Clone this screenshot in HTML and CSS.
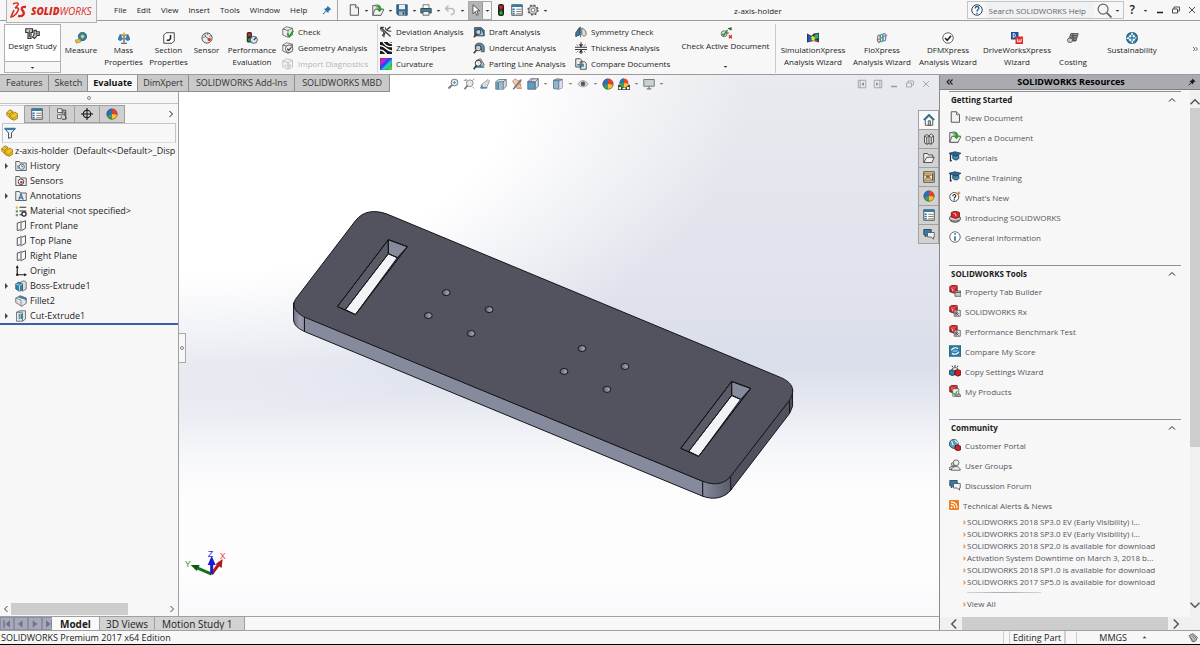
FILE: index.html
```html
<!DOCTYPE html>
<html lang="en">
<head>
<meta charset="utf-8">
<title>z-axis-holder</title>
<link rel="stylesheet" href="styles.css">
</head>
<body>
<svg class="sprite" aria-hidden="true">
  <defs>
    <linearGradient id="rainbow" x1="0" y1="0" x2="1" y2="1"><stop offset="0" stop-color="#e02020"/><stop offset=".25" stop-color="#d020e0"/><stop offset=".45" stop-color="#2040f0"/><stop offset=".6" stop-color="#20d0e0"/><stop offset=".8" stop-color="#30d030"/><stop offset="1" stop-color="#f0e020"/></linearGradient>
  </defs>
  <symbol id="i-caret" viewBox="0 0 8 8"><path d="M1 3h6L4 6z" fill="#333"/></symbol>
  <symbol id="i-pin" viewBox="0 0 16 16"><path d="M9 1l6 6-2 .5-2.500 2.500-.5 3-3-3L2 15l-1-1 5-5-3-3 3-.5L8.500 3z" fill="currentColor"/></symbol>
  <symbol id="i-new" viewBox="0 0 16 16"><path d="M3 1h7l4 4v10H3z" fill="#f2f2f2" stroke="#555" stroke-width="1.300"/><path d="M10 1v4h4" fill="#ddd" stroke="#555"/></symbol>
  <symbol id="i-open" viewBox="0 0 16 16"><path d="M1 15V2h4l1 2h5l1 11z" fill="#e8e8e8" stroke="#555" stroke-width="1.200"/><path d="M1 15l3-8h12l-4 8z" fill="#f5f5f5" stroke="#555" stroke-width="1.200"/><path d="M4 1c5-1 8 1 8 5h2.500L10 11 5.500 6H9c0-2-2-4-5-5z" fill="#2f9a2f"/></symbol>
  <symbol id="i-save" viewBox="0 0 16 16"><path d="M1 1h14v14H3l-2-2z" fill="#2f6f96" stroke="#24495f"/><path d="M4 1h8v6H4z" fill="#e8eef2"/><path d="M4 10h8v5H4z" fill="#aab4bb"/><path d="M9 11h2v3H9z" fill="#333"/></symbol>
  <symbol id="i-print" viewBox="0 0 16 16"><path d="M4 1h8v5H4z" fill="#fff" stroke="#555"/><path d="M1 6h14v6H1z" fill="#3e7ea5" stroke="#333"/><path d="M4 10h8v5H4z" fill="#eee" stroke="#444"/></symbol>
  <symbol id="i-undo" viewBox="0 0 16 16"><path d="M6 2L2 6l4 4M2 6h7c6 0 6 8 0 8" fill="none" stroke="#bbb" stroke-width="2"/></symbol>
  <symbol id="i-cursor" viewBox="0 0 16 16"><path d="M4 1l9 8H9l2 5-2 1-2-5-3 3z" fill="#fff" stroke="#333"/></symbol>
  <symbol id="i-traffic" viewBox="0 0 16 16"><rect x="4" y="0" width="8" height="16" rx="3" fill="#222"/><circle cx="8" cy="4" r="2.500" fill="#d22"/><circle cx="8" cy="8.500" r="1.500" fill="#555"/><circle cx="8" cy="12" r="2.200" fill="#2b2"/></symbol>
  <symbol id="i-list" viewBox="0 0 16 16"><path d="M1 1h14v14H1z" fill="#fff" stroke="#444" stroke-width="1.200"/><path d="M1 1h14v3H1z" fill="#2f7fa8"/><path d="M2 6h3v2H2zM2 9h3v2H2zM2 12h3v2H2z" fill="#2f7fa8"/><path d="M7 7h7M7 10h7M7 13h7" stroke="#555"/></symbol>
  <symbol id="i-gear" viewBox="0 0 16 16"><circle cx="8" cy="8" r="5.500" fill="#ddd" stroke="#555" stroke-width="1.200"/><circle cx="8" cy="8" r="6.500" fill="none" stroke="#555" stroke-width="2" stroke-dasharray="2.500 2.600"/><circle cx="8" cy="8" r="2.500" fill="#fff" stroke="#555"/></symbol>
  <symbol id="i-help" viewBox="0 0 16 16"><circle cx="8" cy="8" r="7" fill="#fff" stroke="#335" stroke-width="1.300"/><path d="M5.500 6c0-3.500 5-3.500 5-.5C10.500 7.500 8 7.500 8 10M8 11.500v1.800" fill="none" stroke="#16618c" stroke-width="1.800"/></symbol>
  <symbol id="i-search" viewBox="0 0 16 16"><circle cx="6.500" cy="6.500" r="5.300" fill="none" stroke="#666" stroke-width="1.300"/><path d="M10.500 10.500l5 5" stroke="#666" stroke-width="2"/></symbol>
  <symbol id="i-min" viewBox="0 0 16 16"><path d="M2 13h12" stroke="currentColor" stroke-width="3"/></symbol>
  <symbol id="i-restore" viewBox="0 0 16 16"><path d="M1 6h10v8H1zM4 6V2h11v8h-4" fill="none" stroke="currentColor" stroke-width="1.500"/></symbol>
  <symbol id="i-close" viewBox="0 0 16 16"><path d="M2 2l12 12M14 2L2 14" stroke="currentColor" stroke-width="1.600"/></symbol>
  <symbol id="i-study" viewBox="0 0 20 16"><path d="M1 1h9v5H8v8H4V6H1z" fill="#ccc" stroke="#333" stroke-width="1.500"/><path d="M12 3h3v2h4v5h-3l-3 4-3-2 2-3z" fill="#ccc" stroke="#333" stroke-width="1.500"/><path d="M6 3v9" stroke="#333"/><circle cx="15.500" cy="7.500" r="1.300" fill="#333"/></symbol>
  <symbol id="i-measure" viewBox="0 0 16 16"><circle cx="10" cy="6" r="5.500" fill="#2f88ae" stroke="#1c4a63"/><circle cx="10" cy="6" r="2.200" fill="#f0d040"/><path d="M0 11l7-2 1 4-6 2z" fill="#f0c020" stroke="#666" stroke-width=".7"/></symbol>
  <symbol id="i-mass" viewBox="0 0 16 16"><path d="M8 1v13M4 15h8M2 4h12" stroke="#444" stroke-width="1.500"/><path d="M0 9l3-5 3 5c-1 3-5 3-6 0zM10 9l3-5 3 5c-1 3-5 3-6 0z" fill="#2f88c0" stroke="#1c5a83"/><circle cx="8" cy="3" r="1.800" fill="#f0c020"/></symbol>
  <symbol id="i-section" viewBox="0 0 16 16"><path d="M1 4l3-3h11v11l-3 3H1z" fill="#fff" stroke="#444" stroke-width="1.300"/><path d="M5 11h3l2-2V4" fill="none" stroke="#222" stroke-width="2"/></symbol>
  <symbol id="i-sensor" viewBox="0 0 16 16"><circle cx="8" cy="8" r="6.800" fill="#eee" stroke="#444" stroke-width="1.200"/><path d="M5 5l6 5" stroke="#555" stroke-width="1.300" fill="none"/><circle cx="11" cy="10" r="2.200" fill="#d33"/><path d="M3 7h2M5 3l1 2M9 2v2M13 5l-2 1" stroke="#333"/></symbol>
  <symbol id="i-perf" viewBox="0 0 16 16"><rect x="1" y="0" width="7" height="14" rx="2" fill="#333"/><circle cx="4.500" cy="3.500" r="2" fill="#e22"/><circle cx="4.500" cy="10.500" r="1.700" fill="#2b2"/><circle cx="10.500" cy="10.500" r="4.700" fill="#cfe3ee" stroke="#245"/><path d="M10.500 10.500l3-3" stroke="#222" stroke-width="1.500"/></symbol>
  <symbol id="i-cube" viewBox="0 0 16 16"><path d="M1 4l5-3 8 2v9l-6 3-7-3z" fill="#eee" stroke="#555"/><path d="M1 4l7 2v9M8 6l6-3" fill="none" stroke="#555"/></symbol>
  <symbol id="i-check" viewBox="0 0 16 16"><use href="#i-cube"/><path d="M7 10l3 4 5-8" fill="none" stroke="#28a028" stroke-width="2.400"/></symbol>
  <symbol id="i-geom" viewBox="0 0 16 16"><use href="#i-cube"/><circle cx="9.500" cy="9" r="5" fill="#eee" stroke="#444"/><path d="M7 9l2 2 3.500-4" fill="none" stroke="#222" stroke-width="1.500"/></symbol>
  <symbol id="i-import" viewBox="0 0 16 16"><g opacity=".4"><use href="#i-cube"/><path d="M3 9h5V6l5 4-5 4v-3H3z" fill="#999"/></g></symbol>
  <symbol id="i-dev" viewBox="0 0 16 16"><path d="M1 2l13 12M1 6c5 0 5 5 4 9M7 2c0 4 4 5 8 5" fill="none" stroke="#333" stroke-width="1.400"/><path d="M9 5l5-4M3 13l4-4M1 2h4M1 2v3" stroke="#333" stroke-width="1.800"/></symbol>
  <symbol id="i-zebra" viewBox="0 0 16 16"><path d="M0 0h16v16H0z" fill="#1a1a1a"/><path d="M0 5c7-1 9 8 16 7M0 11c5-1 6 4 9 5M4 0c3 5 7 7 12 6M11 0c1 1 3 2 5 2" fill="none" stroke="#fff" stroke-width="1.800"/></symbol>
  <symbol id="i-curv" viewBox="0 0 16 16"><path d="M0 0h16v16H0z" fill="url(#rainbow)" stroke="#446" stroke-width=".6"/></symbol>
  <symbol id="i-draft" viewBox="0 0 16 16"><path d="M2 2h9l4 4v7H2z" fill="#2f7fa8" stroke="#444"/><path d="M6 5h6l3 8H5z" fill="#9cc" stroke="#345"/><circle cx="7" cy="8" r="3.500" fill="#dde" fill-opacity=".7" stroke="#333" stroke-width="1.200"/><path d="M5 11l-4 4" stroke="#333" stroke-width="2"/></symbol>
  <symbol id="i-under" viewBox="0 0 16 16"><path d="M3 4c4-5 12-2 12 3v6h-4V9H3z" fill="#5a8fad" stroke="#444"/><circle cx="7" cy="8" r="3.700" fill="#dde" fill-opacity=".8" stroke="#333" stroke-width="1.200"/><path d="M4.500 11L1 15" stroke="#333" stroke-width="2"/></symbol>
  <symbol id="i-part" viewBox="0 0 16 16"><path d="M5 3l5-2 5 8-5 3z" fill="#ccc" stroke="#444"/><path d="M4 12h11" stroke="#2f7fa8" stroke-width="2"/><circle cx="7" cy="7" r="4" fill="#fff" fill-opacity=".7" stroke="#333" stroke-width="1.300"/><path d="M4.500 10L1 15" stroke="#333" stroke-width="2"/></symbol>
  <symbol id="i-symm" viewBox="0 0 16 16"><path d="M1 14V9l5-7v10z" fill="#2f7fa8" stroke="#234"/><path d="M7.500 1v14" stroke="#333"/><path d="M9 3c3 0 6 4 6 8l-3 3-3-3z" fill="#ddd" stroke="#444"/></symbol>
  <symbol id="i-thick" viewBox="0 0 16 16"><path d="M0 7h16M0 10h16M8 0v6M8 11v5" stroke="#333" stroke-width="1.300"/><path d="M5 3l3 4 3-4zM5 14l3-4 3 4z" fill="#333"/><path d="M2 3l2 2M14 3l-2 2M2 14l2-2M14 14l-2-2" stroke="#555"/></symbol>
  <symbol id="i-comp" viewBox="0 0 16 16"><path d="M1 1h6l2 2v9H1zM7 5h6l2 2v8H7z" fill="#eee" stroke="#444" stroke-width="1.200"/><path d="M3 9h5c3 0 3-3 3 3" fill="none" stroke="#2f7fa8" stroke-width="1.700"/></symbol>
  <symbol id="i-active" viewBox="0 0 16 16"><circle cx="5.500" cy="9" r="4" fill="#dde" stroke="#555"/><path d="M3 9l2 2 5-7" fill="none" stroke="#28a028" stroke-width="2"/><path d="M8 8h4M11 2l4-1v3z" stroke="#333" fill="#28a028"/><path d="M12 11l4 4M16 11l-4 4" stroke="#e22" stroke-width="2"/></symbol>
  <symbol id="i-simx" viewBox="0 0 16 16"><path d="M0 2l6 3 3-3 7-1v13l-7-2-9 2z" fill="#335"/><path d="M2 4l4 3v5l-4 1z" fill="#26c"/><path d="M6 5l5 2-1 5-4-1z" fill="#ee2"/><path d="M10 4l5-2v6l-5 2z" fill="#2b5"/><path d="M10 10l5 2v1l-5-1z" fill="#e42"/></symbol>
  <symbol id="i-flo" viewBox="0 0 16 16"><g fill="none" stroke-width="1.500"><ellipse cx="4" cy="9" rx="2" ry="5" stroke="#777"/><ellipse cx="7.500" cy="8" rx="2" ry="5" stroke="#2a7"/><ellipse cx="11" cy="7" rx="2" ry="5" stroke="#48c"/><path d="M1 11l14-7" stroke="#c66"/></g></symbol>
  <symbol id="i-dfm" viewBox="0 0 16 16"><circle cx="8" cy="8" r="7" fill="#fff" stroke="#555" stroke-width="1.200"/><path d="M4 8l3 3 5-6" fill="none" stroke="#222" stroke-width="2.200"/></symbol>
  <symbol id="i-drive" viewBox="0 0 16 16"><path d="M0 0h10v10H0z" fill="#1c4fa0"/><path d="M6 6h10v10H6z" fill="#e02828"/><path d="M3 2v5M3 2c4 0 4 5 0 5M8.500 9v4h5V9M11 10v3" fill="none" stroke="#fff" stroke-width="1.200"/></symbol>
  <symbol id="i-cost" viewBox="0 0 16 16"><path d="M5 2h10l-3 10H2z" fill="#999" stroke="#444"/><path d="M5 5h9M4 8h9M3 11h9M8 2v9" stroke="#333"/><ellipse cx="4" cy="11" rx="3.500" ry="3" fill="#ccc" stroke="#444"/></symbol>
  <symbol id="i-sust" viewBox="0 0 16 16"><circle cx="8" cy="8" r="6.300" fill="#fff" stroke="#2f7fa8" stroke-width="3" stroke-dasharray="8 2"/><circle cx="8" cy="8" r="7.500" fill="none" stroke="#234" stroke-width=".7"/><path d="M8 4v8M4 8h8" stroke="#2f7fa8" stroke-width="2"/></symbol>
  <symbol id="i-zoomfit" viewBox="0 0 16 16"><circle cx="10" cy="6" r="4.500" fill="#dfeaf2" stroke="#777" stroke-width="1.300"/><path d="M6.500 9.500L2 14" stroke="#777" stroke-width="2.500"/><path d="M8 6h4M10 4v4" stroke="#58a"/></symbol>
  <symbol id="i-zoomarea" viewBox="0 0 16 16"><path d="M4 1v3M1 3h3M15 1l-2 2M15 14l-2-2" stroke="#777"/><circle cx="9" cy="7" r="4.500" fill="#dfeaf2" stroke="#888" stroke-width="1.200"/><path d="M6 10l-4 5" stroke="#777" stroke-width="2.300"/></symbol>
  <symbol id="i-prev" viewBox="0 0 16 16"><path d="M3 9l9-7 2 2-4 9-7 1z" fill="#ddd" stroke="#888"/><path d="M2 13h9M2 13l3-3" stroke="#58a" stroke-width="1.700"/></symbol>
  <symbol id="i-sec" viewBox="0 0 16 16"><path d="M1 5l4-3h10v9l-4 4H1z" fill="#ddd" stroke="#567"/><path d="M1 5h4v10H1z" fill="#5f9dbd"/><path d="M6 5h5v10H6z" fill="#9dbfd0"/><path d="M11 5v10M5 5h6l4-3M5 5v10" stroke="#567" fill="none"/></symbol>
  <symbol id="i-wand" viewBox="0 0 16 16"><path d="M2 4l4-3 3 3 5-2-2 6 2 6H8z" fill="#e8d0b0" stroke="#a66" stroke-width=".8"/><path d="M3 15L13 3" stroke="#777" stroke-width="2.300"/><path d="M9 8l5 1M8 10l5 4" stroke="#d73"/></symbol>
  <symbol id="i-orient" viewBox="0 0 16 16"><path d="M1 5h10v10H1z" fill="#5f9dbd" stroke="#468"/><path d="M1 5l4-4h10v10l-4 4V5z" fill="#dde" stroke="#567" stroke-width="1.200"/><path d="M11 5l4-4M8 1L4 5" stroke="#567"/></symbol>
  <symbol id="i-style" viewBox="0 0 16 16"><path d="M2 3l5-2 7 1v11l-5 2-7-1z" fill="#8ab8d0" stroke="#567"/><path d="M9 4v11l5-2V2z" fill="#dde"/><path d="M2 3l7 1 5-2M9 4v11" fill="none" stroke="#567"/></symbol>
  <symbol id="i-eye" viewBox="0 0 16 16"><path d="M1 8c4-6 10-6 14 0-4 5-10 5-14 0z" fill="#ddd" stroke="#888"/><circle cx="8" cy="7.500" r="3" fill="#555"/></symbol>
  <symbol id="i-ball" viewBox="0 0 16 16"><circle cx="8" cy="8" r="7" fill="#eb3b2f"/><path d="M8 8V1a7 7 0 0 0-6.500 9.500z" fill="#2b6cc4"/><path d="M8 8l-6.500 2.500A7 7 0 0 0 8 15z" fill="#2fa84a"/><path d="M8 8v7a7 7 0 0 0 7-6z" fill="#f2c52b"/><circle cx="8" cy="8" r="7" fill="none" stroke="#555" stroke-width=".8"/></symbol>
  <symbol id="i-scene" viewBox="0 0 16 16"><path d="M0 9h16v7H0z" fill="#444"/><path d="M1 12h3v3H1zM6 13h4v2H6zM12 12h3v3h-3z" fill="#eee"/><circle cx="8" cy="6.500" r="6" fill="#e43"/><path d="M8 6.500V.5a6 6 0 0 0-6 7z" fill="#27b"/><path d="M8 6.500l-6 1A6 6 0 0 0 8 12.500z" fill="#3a4"/><path d="M8 6.500v6a6 6 0 0 0 6-5z" fill="#f2c52b"/></symbol>
  <symbol id="i-monitor" viewBox="0 0 16 16"><path d="M1 2h14v9H1z" fill="#c8d0d4" stroke="#777" stroke-width="1.300"/><path d="M8 11v3M5 14.500h6" stroke="#777" stroke-width="1.500"/></symbol>
  <symbol id="i-paneL" viewBox="0 0 16 16"><path d="M2 2h12v12H2zM5 2v12" fill="none" stroke="#999" stroke-width="1.300"/><path d="M11 5v6L7 8z" fill="#888"/></symbol>
  <symbol id="i-paneR" viewBox="0 0 16 16"><path d="M2 2h12v12H2zM11 2v12" fill="none" stroke="#999" stroke-width="1.300"/><path d="M5 5v6l4-3z" fill="#888"/></symbol>
  <symbol id="i-partdoc" viewBox="0 0 16 16"><path d="M1 5l4-4 4 2v3l3-2 4 3v5l-5 3-5-2-5-5z" fill="#f3c325" stroke="#8a6a10"/><path d="M1 5l4 2 4-4M5 7v3l5 3 6-5M9 6l-4 4" fill="none" stroke="#8a6a10" stroke-width=".8"/></symbol>
  <symbol id="i-config" viewBox="0 0 16 16"><path d="M2 1h6v5H2zM2 9h5v5H2z" fill="#eee" stroke="#444"/><path d="M8 3h5v12H8M10 6l4 8" fill="none" stroke="#444" stroke-width="1.300"/><circle cx="10" cy="7" r="2" fill="#aaa" stroke="#444"/></symbol>
  <symbol id="i-target" viewBox="0 0 16 16"><circle cx="8" cy="8" r="5" fill="none" stroke="#111" stroke-width="1.400"/><path d="M8 0v16M0 8h16" stroke="#111" stroke-width="1.400"/></symbol>
  <symbol id="i-filter" viewBox="0 0 16 16"><path d="M1 2h14l-5 6v6l-4 1V8z" fill="#eee" stroke="#345" stroke-width="1.200"/><path d="M1 1h14v3H1z" fill="#2f7fa8"/></symbol>
  <symbol id="i-folder" viewBox="0 0 16 16"><path d="M1 14V2h5l1 2h8v10z" fill="#eee" stroke="#555" stroke-width="1.200"/></symbol>
  <symbol id="i-history" viewBox="0 0 16 16"><use href="#i-folder"/><circle cx="9" cy="9" r="3.500" fill="#fff" stroke="#2f6f96" stroke-width="1.300"/><path d="M9 7v2h2M4 7v5" fill="none" stroke="#234"/></symbol>
  <symbol id="i-sensors" viewBox="0 0 16 16"><use href="#i-folder"/><circle cx="8" cy="9" r="3.700" fill="#fff" stroke="#333" stroke-width="1.200"/><circle cx="8.500" cy="9.500" r="1.700" fill="#d33"/></symbol>
  <symbol id="i-annot" viewBox="0 0 16 16"><use href="#i-folder"/><path d="M5 13l3-8 3 8M6 10.500h4" fill="none" stroke="#2f6f96" stroke-width="1.500"/></symbol>
  <symbol id="i-material" viewBox="0 0 16 16"><path d="M1 2h3v3H1z" fill="#e8c020"/><path d="M1 7h3v3H1z" fill="#3a8"/><path d="M1 12h3v3H1z" fill="#888"/><path d="M6 3h9M6 8h9M6 13h4" stroke="#333" stroke-width="1.500"/><circle cx="12" cy="12" r="2.800" fill="#fff" stroke="#222" stroke-width="1.600"/></symbol>
  <symbol id="i-plane" viewBox="0 0 16 16"><path d="M7 3L3 4v10l4-1M8 1v14M9 3l5-2v10l-5 3" fill="none" stroke="#444" stroke-width="1.200"/></symbol>
  <symbol id="i-origin" viewBox="0 0 16 16"><path d="M3 2v11h12" fill="none" stroke="#222" stroke-width="1.600"/><path d="M1 4l2-4 2 4zM12 11l4 2-4 2z" fill="#222"/><circle cx="3" cy="13" r="1.700" fill="#222"/></symbol>
  <symbol id="i-boss" viewBox="0 0 16 16"><path d="M7 3l5-2 3 2v9l-5 3z" fill="#ddd" stroke="#555"/><path d="M1 5l4-2 5 2v8l-4 2-5-3z" fill="#3586ad" stroke="#1c4a63"/><path d="M1 5l5 2 4-2M6 7v8" fill="none" stroke="#cfe3ee"/></symbol>
  <symbol id="i-fillet" viewBox="0 0 16 16"><path d="M1 4l6-3 8 3v7l-6 4-8-5z" fill="#e4e4e4" stroke="#555"/><path d="M7 1l8 3v5c-1-3-3-4-6-4L4 3z" fill="#3586ad"/><path d="M1 4l7 3v8" fill="none" stroke="#777"/></symbol>
  <symbol id="i-cut" viewBox="0 0 16 16"><path d="M2 3l4-2h8v11l-4 3H2z" fill="#e4e4e4" stroke="#555"/><path d="M10 4v11M2 3h8" stroke="#555"/><path d="M5 5h5v7H5z" fill="#3586ad"/><path d="M7 5v7" stroke="#cfe3ee"/></symbol>
  <symbol id="i-home" viewBox="0 0 16 16"><path d="M3 8v7h10V8L8 3z" fill="#fff" stroke="#444" stroke-width="1.200"/><path d="M1 8l7-7 7 7" fill="none" stroke="#1f6f96" stroke-width="2.200"/><path d="M7 9h3v6H7z" fill="#bbb" stroke="#444"/></symbol>
  <symbol id="i-library" viewBox="0 0 16 16"><path d="M2 4l3-2 3 2 3-3 3 3v8l-3 3-3-1-3 1-3-2z" fill="#e4e4e4" stroke="#444" stroke-width="1.200"/><path d="M5 6v9M8 4v10M11 6v9M2 4l3 2 3-2 3 2 3-2" fill="none" stroke="#444" stroke-width="1.200"/></symbol>
  <symbol id="i-files" viewBox="0 0 16 16"><path d="M1 14V2h5l1 2h6v3M1 14l4-7h10l-3 7z" fill="#f2f2f2" stroke="#444" stroke-width="1.200"/></symbol>
  <symbol id="i-palette" viewBox="0 0 16 16"><path d="M1 1h14v14H1z" fill="#eee" stroke="#444" stroke-width="1.300"/><path d="M2 3h9v3H2zM2 13l2-4h6l2 4z" fill="#f0b820" stroke="#765" stroke-width=".8"/><path d="M4 6h5v3H4z" fill="#765"/><path d="M13 3v10" stroke="#333" stroke-width="1.500"/></symbol>
  <symbol id="i-chat" viewBox="0 0 16 16"><path d="M1 2h10v7H6l-3 3V9H1z" fill="#2f7fa8" stroke="#234"/><path d="M6 6h9v6h-1v3l-3-3H6z" fill="#f2f2f2" stroke="#444"/></symbol>
  <symbol id="i-cap" viewBox="0 0 16 16"><path d="M5 6v4c2 2 6 3 8 0V6z" fill="#3b8fbb" stroke="#123"/><path d="M0 3l8-2 8 2-7 4z" fill="#256a90" stroke="#1c3a53"/><path d="M2 4v10M1 13h3" stroke="#234" stroke-width="1.600"/></symbol>
  <symbol id="i-whats" viewBox="0 0 16 16"><circle cx="7" cy="8" r="6" fill="#fff" stroke="#444" stroke-width="1.200"/><path d="M5 7c0-3 4-3 4-.5C9 8 7 8 7 10M7 11v1.500" fill="none" stroke="#222" stroke-width="1.500"/><path d="M13 0l1 2 2 .5-2 1-1 2.500-1-2.500-2-1 2-.5z" fill="#e8791e"/></symbol>
  <symbol id="i-intro" viewBox="0 0 16 16"><path d="M1 8c3-3 11-3 14 0v4c-3 4-11 4-14 0z" fill="#ccc" stroke="#333"/><path d="M2 12c3 2 9 2 12 0" fill="none" stroke="#333"/><path d="M3 2l5-2 6 2v6l-5 2-6-2z" fill="#d8232a" stroke="#611"/><path d="M6 3l3 1v3" stroke="#fff" fill="none"/></symbol>
  <symbol id="i-info" viewBox="0 0 16 16"><circle cx="8" cy="8" r="7" fill="#fff" stroke="#444"/><path d="M8 7v6M8 3v2" stroke="#1f78a8" stroke-width="2.200"/></symbol>
  <symbol id="i-redcube" viewBox="0 0 16 16"><path d="M1 2l4-2 6 1v8l-4 2-6-2z" fill="#cf1f28" stroke="#611"/><path d="M1 2l6 1.500V11M7 3.500L11 1" fill="none" stroke="#f08080" stroke-width=".8"/><path d="M3 5l2 .5v3" fill="none" stroke="#fff"/></symbol>
  <symbol id="i-ptab" viewBox="0 0 16 16"><use href="#i-redcube"/><path d="M8 8h8v7H8z" fill="#ccc" stroke="#444"/><path d="M8 10h8" stroke="#444"/></symbol>
  <symbol id="i-rx" viewBox="0 0 16 16"><use href="#i-redcube"/><path d="M7 7h8v8H7z" fill="#eee" stroke="#444"/><path d="M9 14V9h2v2H9l4 3M13 11l-3 3" fill="none" stroke="#333"/></symbol>
  <symbol id="i-score" viewBox="0 0 16 16"><path d="M0 1h16v14H0z" fill="#2f7fa8" stroke="#1c4a63"/><path d="M3 7c2-4 7-4 9-2M13 9c-2 4-7 4-9 2" fill="none" stroke="#fff" stroke-width="1.600"/><path d="M5 8h6" stroke="#fff"/></symbol>
  <symbol id="i-copy" viewBox="0 0 16 16"><path d="M4 1l1 2M8 0v3M12 1l-1 2" stroke="#333" stroke-width="1.300"/><path d="M0 8l4-2 4 2v5l-4 1-4-2z" fill="#2f7fa8" stroke="#123"/><path d="M8 7l4-1 4 2v5l-4 2-4-2z" fill="#cf1f28" stroke="#411"/><path d="M4 5c3-2 6-2 8 0" fill="none" stroke="#333"/></symbol>
  <symbol id="i-prod" viewBox="0 0 16 16"><use href="#i-redcube"/><path d="M5 5h8v10H5z" fill="#eee" stroke="#555"/><path d="M6 11l2 2 3-5" fill="none" stroke="#28a028" stroke-width="1.500"/><path d="M9 15c0-4 7-4 7 0z" fill="#bbb" stroke="#444"/></symbol>
  <symbol id="i-portal" viewBox="0 0 16 16"><circle cx="6.500" cy="6.500" r="6" fill="#5b9dbf" stroke="#234"/><path d="M3 3c3 1 0 4 3 5M8 1c0 3 4 2 4 5" stroke="#dfe" stroke-width="1.500" fill="none"/><path d="M8 9l4-1 4 2v4l-4 2-4-2z" fill="#cf1f28" stroke="#411"/></symbol>
  <symbol id="i-users" viewBox="0 0 16 16"><path d="M0 14c0-4 3-4 5-4l3-1 1 5z" fill="#ccc" stroke="#444"/><circle cx="5" cy="7" r="2" fill="#ddd" stroke="#444"/><path d="M3 15c0-3 3-4 5-5h3c2 1 4 2 4 5z" fill="#e8e8e8" stroke="#444"/><circle cx="9.500" cy="5" r="3.800" fill="#eee" stroke="#444"/></symbol>
  <symbol id="i-rss" viewBox="0 0 16 16"><rect width="16" height="16" rx="2" fill="#f07c1c"/><circle cx="4" cy="12" r="1.600" fill="#fff"/><path d="M3 7c4 0 6 2 6 6M3 3c7 0 10 4 10 10" fill="none" stroke="#fff" stroke-width="1.800"/></symbol>
  <symbol id="i-up" viewBox="0 0 16 16"><path d="M2 11l6-6 6 6" fill="none" stroke="currentColor" stroke-width="2"/></symbol>
  <symbol id="i-down" viewBox="0 0 16 16"><path d="M2 5l6 6 6-6" fill="none" stroke="currentColor" stroke-width="2"/></symbol>
  <symbol id="i-left" viewBox="0 0 16 16"><path d="M11 2L5 8l6 6" fill="none" stroke="currentColor" stroke-width="2"/></symbol>
  <symbol id="i-right" viewBox="0 0 16 16"><path d="M5 2l6 6-6 6" fill="none" stroke="currentColor" stroke-width="2"/></symbol>
  <symbol id="i-dleft" viewBox="0 0 16 16"><path d="M7 3L2 8l5 5M13 3L8 8l5 5" fill="none" stroke="currentColor" stroke-width="2.200"/></symbol>
  <symbol id="i-dright" viewBox="0 0 16 16"><path d="M4 4l4 4-4 4M9 4l4 4-4 4" fill="none" stroke="currentColor" stroke-width="1.600"/></symbol>
  <symbol id="i-first" viewBox="0 0 16 16"><path d="M4 3v10" stroke="#737486" stroke-width="2"/><path d="M12 3v10L6 8z" fill="#737486"/></symbol>
  <symbol id="i-back" viewBox="0 0 16 16"><path d="M10 3v10L4 8z" fill="#737486"/></symbol>
  <symbol id="i-fwd" viewBox="0 0 16 16"><path d="M5 3v10l6-5z" fill="#737486"/></symbol>
  <symbol id="i-last" viewBox="0 0 16 16"><path d="M12 3v10" stroke="#737486" stroke-width="2"/><path d="M4 3v10l6-5z" fill="#737486"/></symbol>
  <symbol id="i-tag" viewBox="0 0 16 16"><path d="M2 4l6-3 7 6-3 6-5 1z" fill="#ccc" stroke="#444" stroke-width="1.200"/><path d="M5 4l7 7M3 7l6 6M7 3l6 5" stroke="#444"/></symbol>
</svg>

<header class="titlebar">
  <div class="brand">
    <svg class="brand-mark" viewBox="0 0 18 18" aria-hidden="true"><g fill="none" stroke="#da291c"><path d="M3 2c4-2 6-1 5 1L5 6" stroke-width="1.400"/><path d="M5 6c5-1 4 2 1 6-2 2-4 3-5 3L4 8" stroke-width="1.600"/><path d="M16 5c-5-1-5 2-3 4 2 3 0 6-5 5" stroke-width="2.300"/></g></svg>
    <span class="brand-name"><b>SOLID</b>WORKS</span>
  </div>
  <nav class="menu" aria-label="Main menu">
    <button>File</button><button>Edit</button><button>View</button><button>Insert</button><button>Tools</button><button>Window</button><button>Help</button>
    <button class="menu-pin" aria-label="Pin menu"><svg class="icon-s"><use href="#i-pin"/></svg></button>
  </nav>
  <div class="quick">
    <button aria-label="New"><svg class="icon"><use href="#i-new"/></svg></button><button class="drop" aria-label="New options"><svg class="caret"><use href="#i-caret"/></svg></button>
    <button aria-label="Open"><svg class="icon"><use href="#i-open"/></svg></button><button class="drop" aria-label="Open options"><svg class="caret"><use href="#i-caret"/></svg></button>
    <button aria-label="Save"><svg class="icon"><use href="#i-save"/></svg></button><button class="drop" aria-label="Save options"><svg class="caret"><use href="#i-caret"/></svg></button>
    <button aria-label="Print"><svg class="icon"><use href="#i-print"/></svg></button><button class="drop" aria-label="Print options"><svg class="caret"><use href="#i-caret"/></svg></button>
    <button aria-label="Undo"><svg class="icon"><use href="#i-undo"/></svg></button><button class="drop" aria-label="Undo options"><svg class="caret"><use href="#i-caret"/></svg></button>
    <span class="split"><button class="pressed" aria-label="Select"><svg class="icon"><use href="#i-cursor"/></svg></button><button class="drop" aria-label="Select options"><svg class="caret"><use href="#i-caret"/></svg></button></span>
    <button aria-label="Rebuild"><svg class="icon"><use href="#i-traffic"/></svg></button>
    <button aria-label="File properties"><svg class="icon"><use href="#i-list"/></svg></button>
    <button aria-label="Options"><svg class="icon"><use href="#i-gear"/></svg></button><button class="drop" aria-label="More options"><svg class="caret"><use href="#i-caret"/></svg></button>
  </div>
  <h1 class="doc-title">z-axis-holder</h1>
  <label class="search"><svg class="icon"><use href="#i-help"/></svg><input type="text" placeholder="Search SOLIDWORKS Help" aria-label="Search SOLIDWORKS Help"><svg class="icon-l"><use href="#i-search"/></svg><svg class="caret"><use href="#i-caret"/></svg></label>
  <div class="window-buttons">
    <button class="q" aria-label="Help">?</button><button aria-label="Help options"><svg class="caret"><use href="#i-caret"/></svg></button>
    <button aria-label="Minimize"><svg class="icon-xs"><use href="#i-min"/></svg></button><button aria-label="Restore"><svg class="icon-xs"><use href="#i-restore"/></svg></button><button aria-label="Close"><svg class="icon-xs"><use href="#i-close"/></svg></button>
  </div>
</header>

<section class="ribbon" aria-label="Evaluate commands">
  <button class="study"><span class="study-main"><svg class="icon-w"><use href="#i-study"/></svg>Design Study</span><span class="study-drop"><svg class="caret"><use href="#i-caret"/></svg></span></button>
  <button class="cmd w40"><svg class="icon"><use href="#i-measure"/></svg>Measure</button>
  <button class="cmd w44"><svg class="icon"><use href="#i-mass"/></svg>Mass<br>Properties</button>
  <button class="cmd w44"><svg class="icon"><use href="#i-section"/></svg>Section<br>Properties</button>
  <button class="cmd w32"><svg class="icon"><use href="#i-sensor"/></svg>Sensor</button>
  <button class="cmd w60"><svg class="icon"><use href="#i-perf"/></svg>Performance<br>Evaluation</button>
  <div class="stack s1">
    <button><svg class="icon"><use href="#i-check"/></svg>Check</button>
    <button><svg class="icon"><use href="#i-geom"/></svg>Geometry Analysis</button>
    <button class="off" disabled><svg class="icon"><use href="#i-import"/></svg>Import Diagnostics</button>
  </div>
  <div class="stack s2">
    <button><svg class="icon"><use href="#i-dev"/></svg>Deviation Analysis</button>
    <button><svg class="icon"><use href="#i-zebra"/></svg>Zebra Stripes</button>
    <button><svg class="icon"><use href="#i-curv"/></svg>Curvature</button>
  </div>
  <div class="stack s3">
    <button><svg class="icon"><use href="#i-draft"/></svg>Draft Analysis</button>
    <button><svg class="icon"><use href="#i-under"/></svg>Undercut Analysis</button>
    <button><svg class="icon"><use href="#i-part"/></svg>Parting Line Analysis</button>
  </div>
  <div class="stack s3">
    <button><svg class="icon"><use href="#i-symm"/></svg>Symmetry Check</button>
    <button><svg class="icon"><use href="#i-thick"/></svg>Thickness Analysis</button>
    <button><svg class="icon"><use href="#i-comp"/></svg>Compare Documents</button>
  </div>
  <button class="cmd active-doc"><svg class="icon"><use href="#i-active"/></svg>Check Active Document<svg class="caret"><use href="#i-caret"/></svg></button>
  <button class="cmd w72"><svg class="icon"><use href="#i-simx"/></svg>SimulationXpress<br>Analysis Wizard</button>
  <button class="cmd w66"><svg class="icon"><use href="#i-flo"/></svg>FloXpress<br>Analysis Wizard</button>
  <button class="cmd w66"><svg class="icon"><use href="#i-dfm"/></svg>DFMXpress<br>Analysis Wizard</button>
  <button class="cmd w72"><svg class="icon"><use href="#i-drive"/></svg>DriveWorksXpress<br>Wizard</button>
  <button class="cmd w40"><svg class="icon"><use href="#i-cost"/></svg><br>Costing</button>
  <button class="cmd w80"><svg class="icon"><use href="#i-sust"/></svg>Sustainability</button>
  <button class="more" aria-label="More commands"><svg class="icon-xs"><use href="#i-dright"/></svg></button>
</section>

<main class="workspace">
  <div class="editor">
    <div class="tabrow">
      <nav class="tabs" aria-label="Command tabs">
        <button>Features</button><button class="tight">Sketch</button><button class="tight on">Evaluate</button><button class="tight">DimXpert</button><button class="roomy">SOLIDWORKS Add-Ins</button><button class="roomy">SOLIDWORKS MBD</button>
      </nav>
      <div class="hud">
        <button aria-label="Zoom to fit"><svg class="icon"><use href="#i-zoomfit"/></svg></button>
        <button aria-label="Zoom to area"><svg class="icon"><use href="#i-zoomarea"/></svg></button>
        <button aria-label="Previous view"><svg class="icon"><use href="#i-prev"/></svg></button>
        <button aria-label="Section view"><svg class="icon"><use href="#i-sec"/></svg></button>
        <button aria-label="Dynamic annotation"><svg class="icon"><use href="#i-wand"/></svg></button>
        <button class="wide" aria-label="View orientation"><svg class="icon"><use href="#i-orient"/></svg><svg class="caret"><use href="#i-caret"/></svg></button>
        <button class="wide" aria-label="Display style"><svg class="icon"><use href="#i-style"/></svg><svg class="caret"><use href="#i-caret"/></svg></button>
        <button class="wide" aria-label="Hide or show items"><svg class="icon"><use href="#i-eye"/></svg><svg class="caret"><use href="#i-caret"/></svg></button>
        <button aria-label="Edit appearance"><svg class="icon"><use href="#i-ball"/></svg></button>
        <button class="wide" aria-label="Apply scene"><svg class="icon"><use href="#i-scene"/></svg><svg class="caret"><use href="#i-caret"/></svg></button>
        <button class="wide" aria-label="View settings"><svg class="icon"><use href="#i-monitor"/></svg><svg class="caret"><use href="#i-caret"/></svg></button>
      </div>
      <div class="doc-buttons">
        <button aria-label="Collapse left"><svg class="icon-s"><use href="#i-paneL"/></svg></button><button aria-label="Collapse right"><svg class="icon-s"><use href="#i-paneR"/></svg></button><button aria-label="Minimize document"><svg class="icon-xs"><use href="#i-min"/></svg></button><button aria-label="Restore document"><svg class="icon-xs"><use href="#i-restore"/></svg></button><button aria-label="Close document"><svg class="icon-xs"><use href="#i-close"/></svg></button>
      </div>
    </div>

    <div class="stage">
      <aside class="tree-panel" aria-label="Feature tree">
        <div class="grip"><span></span></div>
        <div class="tree-tabs">
          <button class="on" aria-label="Feature manager"><svg class="icon"><use href="#i-partdoc"/></svg></button><button aria-label="Properties"><svg class="icon"><use href="#i-list"/></svg></button><button aria-label="Configurations"><svg class="icon"><use href="#i-config"/></svg></button><button aria-label="DimXpert manager"><svg class="icon"><use href="#i-target"/></svg></button><button aria-label="Display manager"><svg class="icon"><use href="#i-ball"/></svg></button>
          <button class="next" aria-label="More tabs"><svg class="icon-xs"><use href="#i-right"/></svg></button>
        </div>
        <label class="filter"><svg class="icon"><use href="#i-filter"/></svg><input type="text" aria-label="Filter tree"></label>
        <ul class="tree">
          <li class="root"><svg class="icon"><use href="#i-partdoc"/></svg>z-axis-holder&nbsp; (Default&lt;&lt;Default&gt;_Disp</li>
          <li class="has"><svg class="icon"><use href="#i-history"/></svg>History</li>
          <li><svg class="icon"><use href="#i-sensors"/></svg>Sensors</li>
          <li class="has"><svg class="icon"><use href="#i-annot"/></svg>Annotations</li>
          <li><svg class="icon"><use href="#i-material"/></svg>Material &lt;not specified&gt;</li>
          <li><svg class="icon"><use href="#i-plane"/></svg>Front Plane</li>
          <li><svg class="icon"><use href="#i-plane"/></svg>Top Plane</li>
          <li><svg class="icon"><use href="#i-plane"/></svg>Right Plane</li>
          <li><svg class="icon"><use href="#i-origin"/></svg>Origin</li>
          <li class="has"><svg class="icon"><use href="#i-boss"/></svg>Boss-Extrude1</li>
          <li><svg class="icon"><use href="#i-fillet"/></svg>Fillet2</li>
          <li class="has"><svg class="icon"><use href="#i-cut"/></svg>Cut-Extrude1</li>
        </ul>
        <div class="hscroll tree-scroll"><svg class="icon-xs"><use href="#i-left"/></svg><span class="track"><span class="thumb"></span></span><svg class="icon-xs"><use href="#i-right"/></svg></div>
      </aside>

      <div class="viewport">
        <svg class="model" viewBox="179 92 760 525" role="img" aria-label="Plate with two slots and eight holes">
          <defs>
            <linearGradient id="roundL"><stop offset="0" stop-color="#6d7180"/><stop offset=".6" stop-color="#9a9fb2"/><stop offset="1" stop-color="#858a9d"/></linearGradient>
            <linearGradient id="roundR"><stop offset="0" stop-color="#868b9e"/><stop offset="1" stop-color="#565965"/></linearGradient>
            <linearGradient id="bore"><stop offset="0" stop-color="#565965"/><stop offset=".7" stop-color="#999eb0"/><stop offset="1" stop-color="#6c707f"/></linearGradient>
            <g id="slot"><path d="M388 240L407 247L355 315L337 307Z" fill="#595b67"/><path d="M388 240L407 247L397 258L388 254Z" fill="#858a9d"/><path d="M388 254L397 258L355 315L345 310Z" class="through"/><path d="M388 240V254L345 310M388 254L397 258" fill="none"/><path d="M388 240L407 247L355 315L337 307Z" fill="none"/></g>
            <ellipse id="hole" rx="4" ry="3" fill="url(#bore)"/>
          </defs>
          <g stroke="#15161a" stroke-width="1" stroke-linejoin="round">
            <path d="M293 303V319C293 326 298 329 304 332V317Z" fill="url(#roundL)"/>
            <path d="M304 317L703 482V497L304 332Z" fill="#858a9d"/>
            <path d="M703 482V497C714 501 725 499 732 490V475Z" fill="url(#roundR)"/>
            <path d="M731 476V491L790 414L793 407V390L789 402Z" fill="#50515c"/>
            <path d="M790 402V414" fill="none"/>
            <path d="M297 297L355 221C363 211 374 210 386 214L781 378C793 383 797 391 789 402L731 477C724 486 713 486 703 482L305 318C294 313 290 305 297 297Z" fill="#52535e"/>
            <use href="#slot"/><use href="#slot" x="344" y="142"/>
            <use href="#hole" x="446" y="293"/><use href="#hole" x="489" y="310"/><use href="#hole" x="428" y="316"/><use href="#hole" x="471" y="334"/>
            <use href="#hole" x="582" y="349"/><use href="#hole" x="625" y="367"/><use href="#hole" x="564" y="372"/><use href="#hole" x="607" y="390"/>
          </g>
          <g stroke-width="3"><path d="M211 575L197 569" stroke="#17701a"/><path d="M190 566L199 566L196 572Z" fill="#0c5a10"/><path d="M211 575L219 564" stroke="#b01820"/><path d="M222 560L221 569L215 565Z" fill="#b01820"/><path d="M211 575V564" stroke="#1a1ad0"/><path d="M211 557L215 566H207Z" fill="#1a1ad0"/></g>
          <g class="axis"><text x="184" y="568" fill="#2f9a2f">Y</text><text x="207" y="558" fill="#2a2af0">Z</text><text x="219" y="560" fill="#f04040">X</text></g>
        </svg>
        <button class="handle" aria-label="Resize panel"><span></span></button>
        <nav class="side-tabs" aria-label="Task pane tabs">
          <button class="on" aria-label="Resources"><svg class="icon"><use href="#i-home"/></svg></button><button aria-label="Design library"><svg class="icon"><use href="#i-library"/></svg></button><button aria-label="File explorer"><svg class="icon"><use href="#i-files"/></svg></button><button aria-label="View palette"><svg class="icon"><use href="#i-palette"/></svg></button><button aria-label="Appearances"><svg class="icon"><use href="#i-ball"/></svg></button><button aria-label="Custom properties"><svg class="icon"><use href="#i-list"/></svg></button><button aria-label="Forum"><svg class="icon"><use href="#i-chat"/></svg></button>
        </nav>
      </div>
    </div>

    <nav class="bottom-tabs" aria-label="Model tabs">
      <div class="vcr"><button aria-label="First"><svg class="icon"><use href="#i-first"/></svg></button><button aria-label="Back"><svg class="icon"><use href="#i-back"/></svg></button><button aria-label="Forward"><svg class="icon"><use href="#i-fwd"/></svg></button><button aria-label="Last"><svg class="icon"><use href="#i-last"/></svg></button></div>
      <button class="on">Model</button><button>3D Views</button><button class="motion">Motion Study 1</button>
    </nav>
  </div>

  <aside class="pane" aria-label="SOLIDWORKS Resources">
    <header class="pane-head"><button aria-label="Collapse pane"><svg class="icon-xs"><use href="#i-dleft"/></svg></button><h2>SOLIDWORKS Resources</h2><button aria-label="Pin pane"><svg class="icon-xs"><use href="#i-pin"/></svg></button></header>
    <div class="pane-body">
      <div class="sections">
        <section>
          <h3>Getting Started<svg class="icon-xs"><use href="#i-up"/></svg></h3>
          <a href="#new"><svg class="icon"><use href="#i-new"/></svg>New Document</a>
          <a href="#open"><svg class="icon"><use href="#i-open"/></svg>Open a Document</a>
          <a href="#tutorials"><svg class="icon"><use href="#i-cap"/></svg>Tutorials</a>
          <a href="#training"><svg class="icon"><use href="#i-cap"/></svg>Online Training</a>
          <a href="#whats-new"><svg class="icon"><use href="#i-whats"/></svg>What's New</a>
          <a href="#intro"><svg class="icon"><use href="#i-intro"/></svg>Introducing SOLIDWORKS</a>
          <a href="#info"><svg class="icon"><use href="#i-info"/></svg>General Information</a>
        </section>
        <section>
          <h3>SOLIDWORKS Tools<svg class="icon-xs"><use href="#i-up"/></svg></h3>
          <a href="#tab-builder"><svg class="icon"><use href="#i-ptab"/></svg>Property Tab Builder</a>
          <a href="#rx"><svg class="icon"><use href="#i-rx"/></svg>SOLIDWORKS Rx</a>
          <a href="#benchmark"><svg class="icon"><use href="#i-rx"/></svg>Performance Benchmark Test</a>
          <a href="#score"><svg class="icon"><use href="#i-score"/></svg>Compare My Score</a>
          <a href="#copy"><svg class="icon"><use href="#i-copy"/></svg>Copy Settings Wizard</a>
          <a href="#products"><svg class="icon"><use href="#i-prod"/></svg>My Products</a>
        </section>
        <section>
          <h3>Community<svg class="icon-xs"><use href="#i-up"/></svg></h3>
          <a href="#portal"><svg class="icon"><use href="#i-portal"/></svg>Customer Portal</a>
          <a href="#groups"><svg class="icon"><use href="#i-users"/></svg>User Groups</a>
          <a href="#forum"><svg class="icon"><use href="#i-chat"/></svg>Discussion Forum</a>
          <a href="#alerts" class="alerts"><svg class="icon-s"><use href="#i-rss"/></svg>Technical Alerts &amp; News</a>
          <ul class="news">
            <li><a href="#n1">SOLIDWORKS 2018 SP3.0 EV (Early Visibility) i...</a></li>
            <li><a href="#n2">SOLIDWORKS 2018 SP3.0 EV (Early Visibility) i...</a></li>
            <li><a href="#n3">SOLIDWORKS 2018 SP2.0 is available for download</a></li>
            <li><a href="#n4">Activation System Downtime on March 3, 2018 b...</a></li>
            <li><a href="#n5">SOLIDWORKS 2018 SP1.0 is available for download</a></li>
            <li><a href="#n6">SOLIDWORKS 2017 SP5.0 is available for download</a></li>
            <li class="all"><a href="#all">View All</a></li>
          </ul>
        </section>
      </div>
      <div class="vscroll"><svg class="icon"><use href="#i-up"/></svg><span class="track"><span class="thumb"></span></span><svg class="icon"><use href="#i-down"/></svg></div>
    </div>
    <div class="hscroll pane-scroll"><svg class="icon"><use href="#i-left"/></svg><span class="track"><span class="thumb"></span></span><svg class="icon"><use href="#i-right"/></svg></div>
  </aside>
</main>

<footer class="status">
  <span class="edition">SOLIDWORKS Premium 2017 x64 Edition</span>
  <span class="cell blank"></span><span class="cell">Editing Part</span><span class="cell blank wide"></span>
  <button class="units">MMGS<svg class="caret flip"><use href="#i-caret"/></svg></button>
  <button class="tag" aria-label="Tags"><svg class="icon-s"><use href="#i-tag"/></svg></button>
</footer>
</body>
</html>
```
FILE: styles.css
```css
*, *::before, *::after { box-sizing: border-box; }
html, body { height: 100%; }
body {
  margin: 0;
  display: flex;
  flex-direction: column;
  overflow: hidden;
  background: #f7f7f7;
  color: #1c1c1c;
  font: 9px/12px "Open Sans", "Noto Sans", sans-serif;
  border-bottom: 1px solid #000;
}
button, input { font: inherit; color: inherit; background: none; border: 0; padding: 0; margin: 0; border-radius: 0; }
button { display: flex; align-items: center; justify-content: center; white-space: nowrap; }
input { min-width: 0; outline: 0; }
h1, h2, h3, ul { margin: 0; padding: 0; font-size: inherit; list-style: none; }
a { color: inherit; text-decoration: none; }
svg { flex: none; display: block; }
.sprite { position: absolute; width: 0; height: 0; }
.icon { width: 12px; height: 12px; }
.icon-s { width: 10px; height: 10px; }
.icon-xs { width: 8px; height: 8px; }
.icon-l { width: 15px; height: 15px; }
.icon-w { width: 15px; height: 12px; }
.caret { width: 5px; height: 5px; }
.flip { transform: rotate(180deg); }

/* title bar */
.titlebar { display: flex; flex: none; height: 21px; border-bottom: 1px solid #9b9b9b; font-size: 8px; }
.brand {
  display: flex; align-items: center; gap: 3px; z-index: 1;
  width: 91px; height: 23px; margin-left: 6px; padding-left: 3px;
  background: #f3f3f3; border: 1px solid #b4b4b4; border-top: 0; color: #da291c;
}
.brand-mark { width: 18px; height: 18px; }
.brand-name { font: italic 10px/12px "Open Sans", sans-serif; }
.brand-name b { font-weight: 800; }
.menu { display: flex; gap: 10px; padding-left: 17px; border-right: 1px solid #a5a5a5; }
.menu-pin { color: #2577a8; margin: 0 5px; }
.quick { display: flex; padding-left: 8px; }
.quick button { width: 16px; }
.quick .drop { width: 8px; }
.split { display: flex; border: 1px solid #a8a8a8; margin: 0 1px 0 2px; height: 19px; align-self: center; }
.quick .split .pressed { width: 14px; background: #b5b5b5; border-right: 1px solid #999; }
.doc-title { flex: 1; text-align: center; font-size: 8px; font-weight: 400; line-height: 21px; }
.search { display: flex; align-items: center; gap: 3px; width: 157px; height: 18px; margin-top: 1px; border: 1px solid #c4c4c4; padding: 0 3px; color: #666; }
.search input { flex: 1; height: 16px; background: #f0f1f5; padding-left: 3px; }
.search input::placeholder { color: #666; opacity: 1; }
.window-buttons { display: flex; align-items: center; gap: 8px; padding: 0 4px 0 6px; }
.window-buttons .q { font-size: 12px; font-weight: 600; }
.window-buttons button { min-width: 5px; }

/* ribbon */
.ribbon { display: flex; flex: none; height: 54px; padding: 3px 0 1px 4px; border-bottom: 1px solid #9b9b9b; font-size: 8px; }
.study { flex-direction: column; width: 57px; height: 49px; background: #fff; border: 1px solid #b0b0b0; }
.study-main { display: flex; flex-direction: column; align-items: center; flex: 1; padding-top: 3px; }
.study-drop { display: flex; justify-content: center; align-items: center; width: 100%; height: 11px; background: #f7f7f7; border-top: 1px solid #b0b0b0; }
.cmd { flex-direction: column; justify-content: flex-start; padding-top: 8px; flex: none; }
.w32 { width: 31px; } .w40 { width: 40px; } .w44 { width: 45px; } .w60 { width: 60px; }
.w66 { width: 66px; } .w72 { width: 72px; } .w80 { width: 78px; }
.active-doc { width: 100px; padding-top: 3px; gap: 1px; border-right: 1px solid #c8c8c8; margin-right: 1px; }
.active-doc .caret { margin-top: 11px; }
.stack { display: flex; flex-direction: column; flex: none; }
.stack button { height: 16px; gap: 4px; justify-content: flex-start; }
.s1 { width: 96px; border-right: 1px solid #d4d4d4; }
.s2 { width: 94px; padding-left: 2px; }
.s3 { width: 102px; padding-left: 1px; }
.off { color: #b5b5b5; }
.more { margin-left: auto; padding-right: 1px; color: #444; }

/* workspace */
.workspace { flex: 1; display: flex; min-height: 0; }
.editor {
  flex: 1; min-width: 0; display: flex; flex-direction: column;
  background:
    radial-gradient(ellipse 60% 62% at 20% 0%, #fff 58%, #ffffff00 100%),
    linear-gradient(to bottom, #e9eaef 0, #dfe2ec 40%, #dadeea 52%, #e4e7f0 58%, #f6f7fa 68%, #fdfdfd 76%, #fdfdfd 90%, #f6f7fa 100%);
}
.tabrow { display: flex; flex: none; height: 17px; }
.tabs { display: flex; background: #c9c9c9; border-bottom: 1px solid #8f8f8f; }
.tabs button { padding: 0 6px; border-right: 1px solid #8f8f8f; color: #333; }
.tabs .tight { padding: 0 5px; }
.tabs .roomy { padding: 0 7px; }
.tabs .on { background: #f7f7f7; font-weight: 700; color: #111; }
.hud { display: flex; padding-left: 55px; }
.hud button { width: 16px; }
.hud .wide { width: 25px; gap: 4px; }
.hud .caret { opacity: .6; }
.doc-buttons { display: flex; margin-left: auto; padding-right: 5px; color: #999; }
.doc-buttons button { width: 16px; }
.stage { flex: 1; display: flex; min-height: 0; }

.tree-panel { width: 179px; flex: none; display: flex; flex-direction: column; background: #f7f7f7; border-right: 1px solid #a0a0a0; }
.grip { height: 12px; display: flex; justify-content: center; align-items: center; border-bottom: 1px solid #c4c4c4; }
.grip span, .handle span { width: 4px; height: 4px; border: 1px solid #888; border-radius: 50%; }
.tree-tabs { display: flex; height: 18px; margin-top: 1px; }
.tree-tabs button { width: 25px; background: #cfcfcf; border: 1px solid #a0a0a0; border-left: 0; }
.tree-tabs .on { background: #f7f7f7; border-bottom: 0; border-top-color: #d0d0d0; }
.tree-tabs .next { margin-left: auto; width: 14px; background: none; border: 0; }
.filter { display: flex; align-items: center; height: 20px; margin: 0 2px; padding-left: 1px; border: 1px solid #c4c4c4; border-bottom-color: #dcdcdc; }
.filter input { flex: 1; }
.tree { border-bottom: 2px solid #3b5fae; overflow: hidden; }
.tree li { display: flex; align-items: center; gap: 3px; height: 15px; padding-left: 15px; white-space: nowrap; }
.tree .root { padding-left: 1px; gap: 2px; }
.tree .has { padding-left: 5px; }
.tree .has::before { content: ""; width: 3px; margin-right: 4px; border: 3px solid transparent; border-left-color: #444; border-right: 0; }
.hscroll { display: flex; align-items: center; }
.track { flex: 1; display: flex; align-self: stretch; }
.thumb { background: #cdcdcd; }
.tree-scroll { margin-top: auto; height: 14px; padding: 1px 2px; gap: 1px; color: #444; }
.tree-scroll .thumb { width: 75%; }

.viewport { flex: 1; position: relative; min-width: 0; }
.model { width: 100%; height: 100%; }
.through { fill: #f2f3f7; }
.axis { font: 9px "Liberation Sans", sans-serif; }
.handle { position: absolute; left: 0; top: 46%; width: 7px; height: 30px; background: #f7f7f7; border: 1px solid #a8a8a8; border-left: 0; }
.side-tabs { position: absolute; right: 0; top: 18px; width: 21px; display: flex; flex-direction: column; border: 1px solid #a0a0a0; }
.side-tabs button { height: 19px; background: #d2d2d2; border-bottom: 1px solid #a0a0a0; }
.side-tabs button:last-child { height: 18px; border-bottom: 0; }
.side-tabs .on { background: #f9f9f9; }

.bottom-tabs { display: flex; flex: none; height: 14px; background: #f7f7f7; border-top: 1px solid #a0a0a0; }
.vcr { display: flex; width: 52px; background: #a7a8bb; }
.vcr button { flex: 1; border: 1px solid #8d8ea2; }
.bottom-tabs > button { padding: 0 6px; background: #d2d2d2; border-right: 1px solid #a0a0a0; font-size: 10px; }
.bottom-tabs > .on { padding: 0 8px; background: #f9f9f9; font-weight: 700; }
.bottom-tabs > .motion { padding: 0 11px 0 7px; }

/* task pane */
.pane { width: 261px; flex: none; display: flex; flex-direction: column; border-left: 1px solid #8a8a8a; background: #f7f7f7; }
.pane-head { display: flex; align-items: center; height: 15px; padding: 0 4px 0 6px; background: #a9abb0; border-bottom: 1px solid #808080; }
.pane-head h2 { flex: 1; text-align: center; font-weight: 700; color: #000; }
.pane-body { flex: 1; display: flex; min-height: 0; }
.sections { flex: 1; padding: 1px 9px 0; min-width: 0; }
.sections section { border-top: 1px solid #8f8f95; margin-bottom: 17px; }
.sections h3 { display: flex; justify-content: space-between; align-items: center; padding: 0 5px 0 2px; margin-bottom: 1px; height: 15px; font-size: 8px; font-weight: 700; }
.sections section > a { display: flex; align-items: center; gap: 4px; height: 20px; color: #55555d; font-size: 8px; }
.sections section > a svg { margin-bottom: 2px; }
.news { padding-left: 14px; font-size: 8px; color: #55555d; }
.news li { display: flex; align-items: center; height: 12px; white-space: nowrap; }
.news li::before { content: "›"; color: #e8791e; font-weight: 700; width: 4px; }
.news .all { position: relative; margin-top: 10px; }
.news .all::after { content: ""; position: absolute; left: 4px; top: -6px; width: 74px; height: 1px; background: linear-gradient(to right, #d5d5de, #a9a9b8, #d5d5de); }
.vscroll { width: 10px; display: flex; flex-direction: column; align-items: center; background: #f0f0f0; color: #555; padding: 6px 0; }
.vscroll .track { align-self: stretch; }
.vscroll .thumb { width: 100%; height: 69%; }
.pane-scroll { height: 13px; padding: 0 18px 0 8px; gap: 2px; background: #f0f0f0; color: #555; }
.pane-scroll .thumb { width: 100%; }

/* status bar */
.status { display: flex; align-items: center; flex: none; height: 14px; border-top: 1px solid #a0a0a0; }
.edition { flex: 1; padding-left: 1px; }
.cell { padding: 0 3px; height: 13px; line-height: 13px; border-left: 1px solid #d0d0d0; border-right: 1px solid #d0d0d0; }
.blank { width: 6px; padding: 0; border-right: 0; }
.blank.wide { width: 11px; }
.units { gap: 15px; padding: 0 41px 0 22px; border-left: 1px solid #d0d0d0; }
.tag { padding-right: 2px; }
```
